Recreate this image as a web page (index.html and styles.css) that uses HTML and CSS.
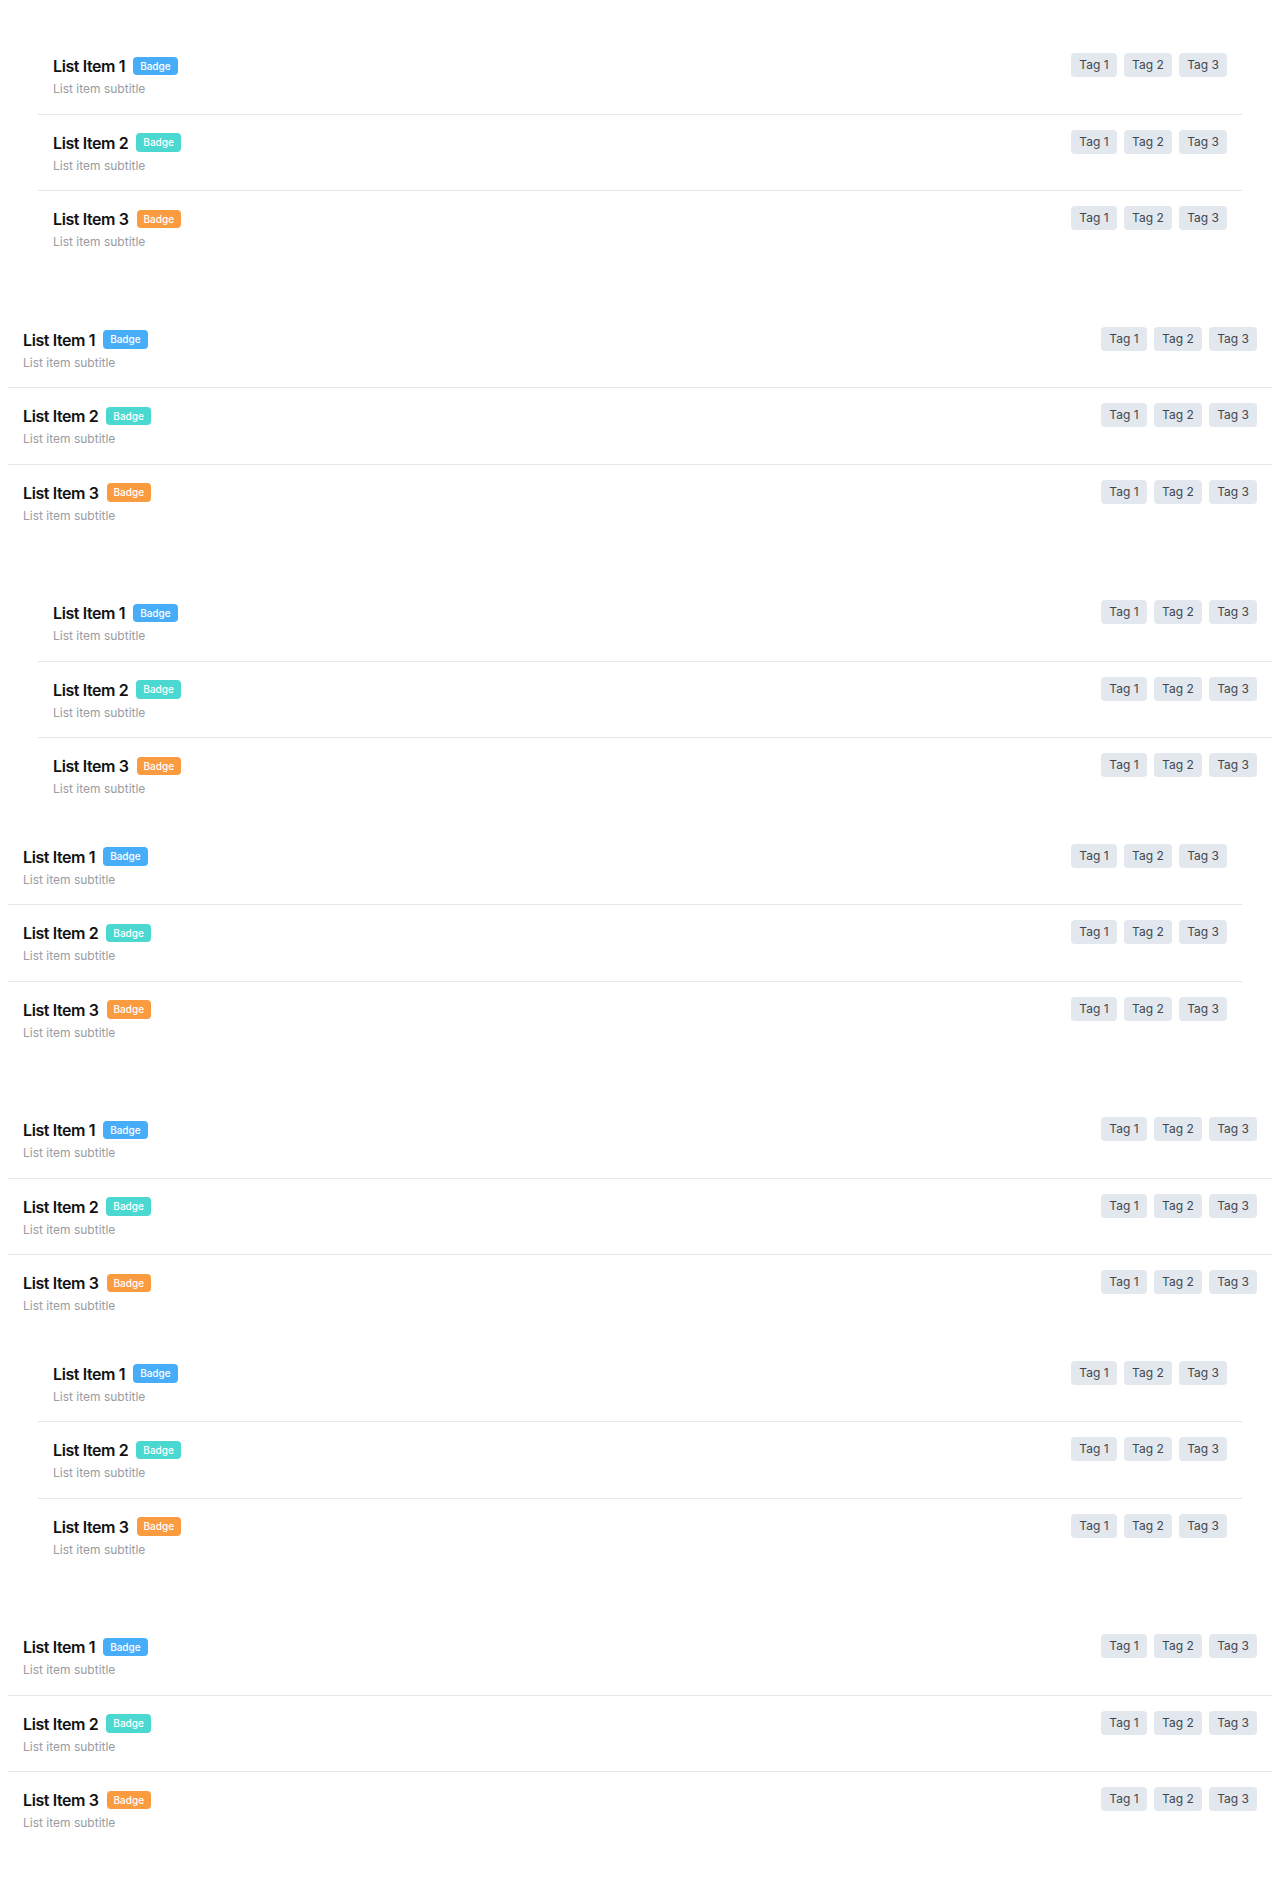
FILE: index.html
```html
<!DOCTYPE html>
<html lang="en">
<head>
<meta charset="utf-8">
<title>Lists</title>
<link rel="stylesheet" href="styles.css">
</head>
<body>
<main class="page">
  <ul class="list list--all">
    <li class="item"><div class="main"><div class="head"><span class="title">List Item 1</span><span class="badge badge--blue">Badge</span></div><div class="sub">List item subtitle</div></div><div class="tags"><span class="tag">Tag 1</span><span class="tag">Tag 2</span><span class="tag">Tag 3</span></div></li>
    <li class="item"><div class="main"><div class="head"><span class="title">List Item 2</span><span class="badge badge--teal">Badge</span></div><div class="sub">List item subtitle</div></div><div class="tags"><span class="tag">Tag 1</span><span class="tag">Tag 2</span><span class="tag">Tag 3</span></div></li>
    <li class="item"><div class="main"><div class="head"><span class="title">List Item 3</span><span class="badge badge--orange">Badge</span></div><div class="sub">List item subtitle</div></div><div class="tags"><span class="tag">Tag 1</span><span class="tag">Tag 2</span><span class="tag">Tag 3</span></div></li>
  </ul>
  <ul class="list">
    <li class="item"><div class="main"><div class="head"><span class="title">List Item 1</span><span class="badge badge--blue">Badge</span></div><div class="sub">List item subtitle</div></div><div class="tags"><span class="tag">Tag 1</span><span class="tag">Tag 2</span><span class="tag">Tag 3</span></div></li>
    <li class="item"><div class="main"><div class="head"><span class="title">List Item 2</span><span class="badge badge--teal">Badge</span></div><div class="sub">List item subtitle</div></div><div class="tags"><span class="tag">Tag 1</span><span class="tag">Tag 2</span><span class="tag">Tag 3</span></div></li>
    <li class="item"><div class="main"><div class="head"><span class="title">List Item 3</span><span class="badge badge--orange">Badge</span></div><div class="sub">List item subtitle</div></div><div class="tags"><span class="tag">Tag 1</span><span class="tag">Tag 2</span><span class="tag">Tag 3</span></div></li>
  </ul>
  <ul class="list list--top-left">
    <li class="item"><div class="main"><div class="head"><span class="title">List Item 1</span><span class="badge badge--blue">Badge</span></div><div class="sub">List item subtitle</div></div><div class="tags"><span class="tag">Tag 1</span><span class="tag">Tag 2</span><span class="tag">Tag 3</span></div></li>
    <li class="item"><div class="main"><div class="head"><span class="title">List Item 2</span><span class="badge badge--teal">Badge</span></div><div class="sub">List item subtitle</div></div><div class="tags"><span class="tag">Tag 1</span><span class="tag">Tag 2</span><span class="tag">Tag 3</span></div></li>
    <li class="item"><div class="main"><div class="head"><span class="title">List Item 3</span><span class="badge badge--orange">Badge</span></div><div class="sub">List item subtitle</div></div><div class="tags"><span class="tag">Tag 1</span><span class="tag">Tag 2</span><span class="tag">Tag 3</span></div></li>
  </ul>
  <ul class="list list--right-bottom">
    <li class="item"><div class="main"><div class="head"><span class="title">List Item 1</span><span class="badge badge--blue">Badge</span></div><div class="sub">List item subtitle</div></div><div class="tags"><span class="tag">Tag 1</span><span class="tag">Tag 2</span><span class="tag">Tag 3</span></div></li>
    <li class="item"><div class="main"><div class="head"><span class="title">List Item 2</span><span class="badge badge--teal">Badge</span></div><div class="sub">List item subtitle</div></div><div class="tags"><span class="tag">Tag 1</span><span class="tag">Tag 2</span><span class="tag">Tag 3</span></div></li>
    <li class="item"><div class="main"><div class="head"><span class="title">List Item 3</span><span class="badge badge--orange">Badge</span></div><div class="sub">List item subtitle</div></div><div class="tags"><span class="tag">Tag 1</span><span class="tag">Tag 2</span><span class="tag">Tag 3</span></div></li>
  </ul>
  <ul class="list">
    <li class="item"><div class="main"><div class="head"><span class="title">List Item 1</span><span class="badge badge--blue">Badge</span></div><div class="sub">List item subtitle</div></div><div class="tags"><span class="tag">Tag 1</span><span class="tag">Tag 2</span><span class="tag">Tag 3</span></div></li>
    <li class="item"><div class="main"><div class="head"><span class="title">List Item 2</span><span class="badge badge--teal">Badge</span></div><div class="sub">List item subtitle</div></div><div class="tags"><span class="tag">Tag 1</span><span class="tag">Tag 2</span><span class="tag">Tag 3</span></div></li>
    <li class="item"><div class="main"><div class="head"><span class="title">List Item 3</span><span class="badge badge--orange">Badge</span></div><div class="sub">List item subtitle</div></div><div class="tags"><span class="tag">Tag 1</span><span class="tag">Tag 2</span><span class="tag">Tag 3</span></div></li>
  </ul>
  <ul class="list list--sides-bottom">
    <li class="item"><div class="main"><div class="head"><span class="title">List Item 1</span><span class="badge badge--blue">Badge</span></div><div class="sub">List item subtitle</div></div><div class="tags"><span class="tag">Tag 1</span><span class="tag">Tag 2</span><span class="tag">Tag 3</span></div></li>
    <li class="item"><div class="main"><div class="head"><span class="title">List Item 2</span><span class="badge badge--teal">Badge</span></div><div class="sub">List item subtitle</div></div><div class="tags"><span class="tag">Tag 1</span><span class="tag">Tag 2</span><span class="tag">Tag 3</span></div></li>
    <li class="item"><div class="main"><div class="head"><span class="title">List Item 3</span><span class="badge badge--orange">Badge</span></div><div class="sub">List item subtitle</div></div><div class="tags"><span class="tag">Tag 1</span><span class="tag">Tag 2</span><span class="tag">Tag 3</span></div></li>
  </ul>
  <ul class="list">
    <li class="item"><div class="main"><div class="head"><span class="title">List Item 1</span><span class="badge badge--blue">Badge</span></div><div class="sub">List item subtitle</div></div><div class="tags"><span class="tag">Tag 1</span><span class="tag">Tag 2</span><span class="tag">Tag 3</span></div></li>
    <li class="item"><div class="main"><div class="head"><span class="title">List Item 2</span><span class="badge badge--teal">Badge</span></div><div class="sub">List item subtitle</div></div><div class="tags"><span class="tag">Tag 1</span><span class="tag">Tag 2</span><span class="tag">Tag 3</span></div></li>
    <li class="item"><div class="main"><div class="head"><span class="title">List Item 3</span><span class="badge badge--orange">Badge</span></div><div class="sub">List item subtitle</div></div><div class="tags"><span class="tag">Tag 1</span><span class="tag">Tag 2</span><span class="tag">Tag 3</span></div></li>
  </ul>
</main>
</body>
</html>
```

FILE: styles.css
```css
html, body {
  background: #ffffff;
}
body {
  margin: 8px;
  font-family: Inter, "Noto Sans", "Liberation Sans", sans-serif;
  color: #111111;
}
.page {
  display: flex;
  flex-direction: column;
  gap: 15px;
}
.list {
  list-style: none;
  margin: 0;
  padding: 0;
}
.list--all {
  margin: 30px;
}
.list--top-left {
  margin-top: 30px;
  margin-left: 30px;
}
.list--right-bottom {
  margin-right: 30px;
  margin-bottom: 30px;
}
.list--sides-bottom {
  margin: 0 30px 30px;
}
.item {
  display: flex;
  justify-content: space-between;
  align-items: flex-start;
  padding: 15px;
  border-bottom: 1px solid #e6e6e6;
}
.item:last-child {
  border-bottom: none;
}
.main {
  display: flex;
  flex-direction: column;
}
.head {
  display: flex;
  align-items: center;
  gap: 8px;
  height: 26px;
}
.title {
  font-size: 16px;
  font-weight: 600;
  line-height: 26px;
  color: #111111;
  letter-spacing: -0.4px;
}
.badge {
  display: inline-block;
  font-size: 10px;
  font-weight: 500;
  line-height: 14.4px;
  padding: 2px 7px;
  border-radius: 4px;
  color: #ffffff;
}
.badge--blue {
  background: #47adf8;
}
.badge--teal {
  background: #4bd8d0;
}
.badge--orange {
  background: #f99b3e;
}
.sub {
  font-size: 12px;
  line-height: 19.5px;
  color: #9a9ca2;
}
.tags {
  display: flex;
  gap: 7.5px;
}
.tag {
  display: inline-block;
  font-size: 12px;
  line-height: 18.3px;
  padding: 3px 8px;
  border-radius: 4px;
  background: #e2e8ee;
  color: #3f4650;
}
```
